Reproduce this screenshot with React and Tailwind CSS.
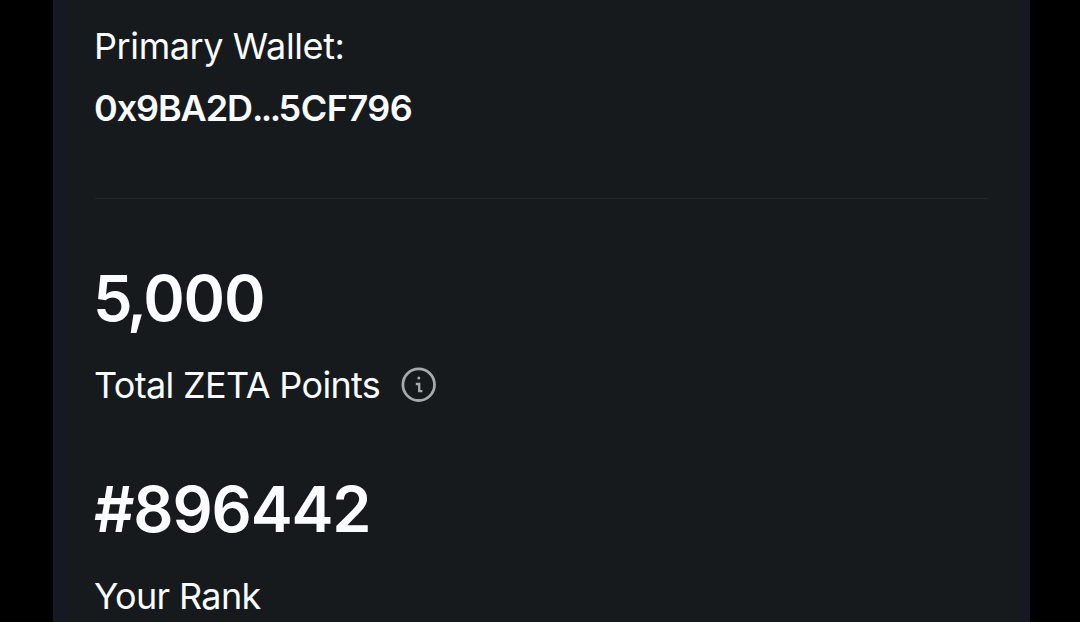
const Stat = ({ children, label, icon }) => (
  <div className="flex flex-col items-start">
    <p className="h-[64px] text-[63px] leading-[63px] font-semibold whitespace-nowrap">{children}</p>
    <div className="mt-[30px] flex h-[48px] items-center">
      <p className="text-[36px] leading-[48px] tracking-[-0.65px] whitespace-nowrap">{label}</p>
      {icon}
    </div>
  </div>
);

const InfoIcon = () => (
  <svg className="mb-px ml-[21px] size-[36px]" viewBox="0 0 36 36" fill="none">
    <circle cx="17.7" cy="17.7" r="15.8" stroke="#a7aaad" strokeWidth="2.8" />
    <path d="M14.8 17H18.2V24.2H21.4" stroke="#a7aaad" strokeWidth="2.3" />
    <circle cx="17.8" cy="11" r="1.5" fill="#a7aaad" />
  </svg>
);

const App = () => {
  return (
    <div className="flex h-[622px] w-full overflow-hidden bg-black pl-[53px] font-['Inter',sans-serif] text-[#fafcfe]">
      <div className="w-[977px] bg-[#161922] pr-[9px] pl-[14px]">
        <div className="h-full bg-[#161a1d] pt-[22px] pr-[33px] pl-[28px]">
          <p className="-ml-px text-[36px] leading-[48px] tracking-[-0.4px]">Primary Wallet:</p>
          <p className="mt-[14px] -ml-px text-[36px] leading-[49px] font-semibold whitespace-nowrap">
            <span className="tracking-[-1.1px]">0x9BA2D</span>
            <span className="tracking-[-2.6px]">...</span>
            <span className="tracking-[-0.5px]">5CF796</span>
          </p>
          <hr className="mt-[65px] border-[#22272b]" />
          <div className="mt-[68px] -ml-px flex flex-col gap-[69px]">
            <Stat label="Total ZETA Points" icon={<InfoIcon />}>
              <span className="-ml-px tracking-[-4px]">5,</span>
              <span className="tracking-[-1.2px]">000</span>
            </Stat>
            <Stat label="Your Rank">
              <span className="tracking-[-1.2px]">#896442</span>
            </Stat>
          </div>
        </div>
      </div>
    </div>
  );
};

export default App;
